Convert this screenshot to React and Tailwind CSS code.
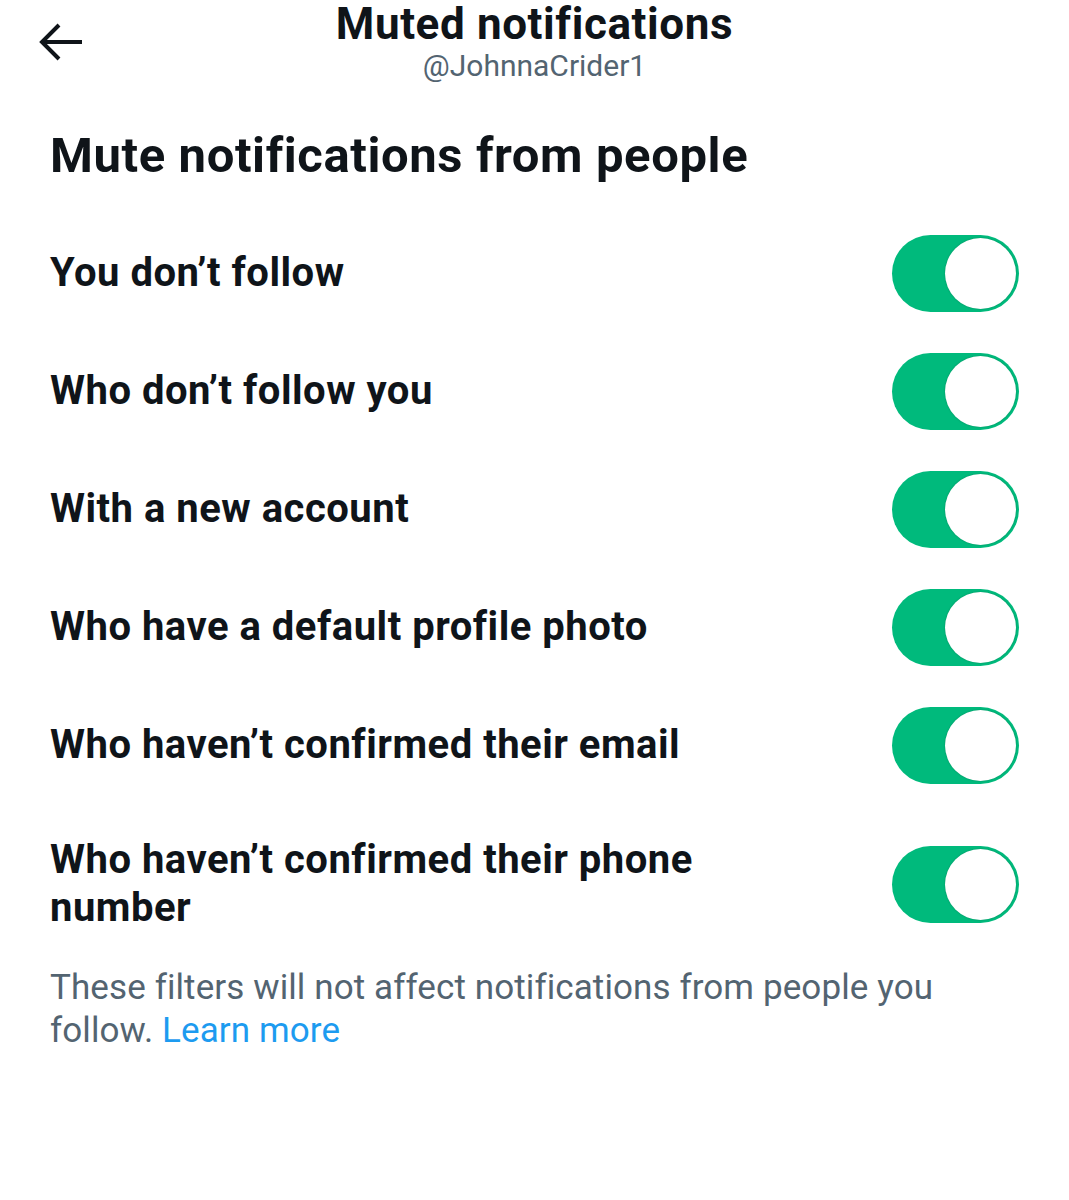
import React from 'react';

const rows = [
  'You don’t follow',
  'Who don’t follow you',
  'With a new account',
  'Who have a default profile photo',
  'Who haven’t confirmed their email',
  'Who haven’t confirmed their phone number',
];

function Toggle() {
  return (
    <div className="w-[127px] h-[77px] rounded-full bg-[#00ba7c] flex items-center justify-end px-[3px] shrink-0">
      <div className="w-[71px] h-[71px] rounded-full bg-white shadow-[0_0_2px_rgba(0,0,0,0.25)]" />
    </div>
  );
}

export default function App() {
  return (
    <div className="w-[1069px] h-[1200px] bg-white text-[#0f1419] font-['Roboto',sans-serif]">
      {/* Header */}
      <div className="relative flex flex-col items-center h-[98px]">
        <button className="absolute left-[38px] top-[22px]">
          <svg width="46" height="40" viewBox="0 0 46 40" fill="none" stroke="#0f1419" strokeWidth="4">
            <path d="M44 20H4" />
            <path d="M21 3L4 20l17 17" />
          </svg>
        </button>
        <h1 className="text-[44px] leading-[48px] font-bold tracking-[0.6px]">Muted notifications</h1>
        <p className="text-[30px] leading-[36px] text-[#536471]">@JohnnaCrider1</p>
      </div>

      <div className="px-[50px]">
        <h2 className="text-[49px] leading-[58px] font-bold tracking-[0.6px] mt-[29px]">Mute notifications from people</h2>

        <div className="mt-[29px] flex flex-col">
          {rows.map((r, i) => (
            <div key={r} className={`flex items-center justify-between gap-8 ${i === rows.length - 1 ? 'h-[160px]' : 'h-[118px]'}`}>
              <span className="text-[40px] leading-[48px] font-bold tracking-[0.5px] max-w-[700px]">{r}</span>
              <Toggle />
            </div>
          ))}
        </div>

        <p className="mt-[2px] text-[35px] leading-[43px] text-[#536471] tracking-[0.1px] max-w-[920px]">
          These filters will not affect notifications from people you follow.{' '}
          <a className="text-[#1d9bf0]">Learn more</a>
        </p>
      </div>
    </div>
  );
}
